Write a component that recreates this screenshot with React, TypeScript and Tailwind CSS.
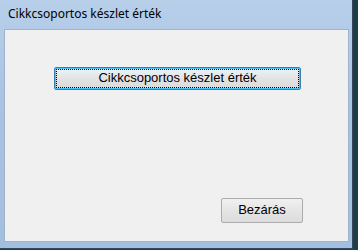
export default function App() {
  return (
    <div className="flex h-[250px] w-[358px] items-start overflow-hidden bg-[#1d3f44]">
      <div className="flex h-[249px] w-[353px] flex-col border-b border-r border-[#34475e] bg-[linear-gradient(180deg,#b7cfe9_0%,#a9c3e2_40%,#a3bfdf_100%)]">
        <div className="flex h-[29px] shrink-0 items-center pb-[2px] pl-[8px] font-['Noto_Sans',sans-serif] text-[12px] text-black">
          Cikkcsoportos készlet érték
        </div>
        <div className="ml-[4px] flex h-[213px] w-[345px] flex-col border border-[#9fb4cc] bg-[#f0f0f0] font-['Liberation_Sans',Arial,sans-serif] text-[13px] text-black">
          <div className="flex pl-[49px] pt-[37px]">
            <button className="flex h-[23px] w-[247px] items-center justify-center rounded-[2px] border border-[#3c7fb1] bg-[linear-gradient(180deg,#ecf4fb_0%,#e3e3e3_50%,#dadada_100%)] p-[1px] shadow-[inset_0_0_0_1px_#48c5f8]">
              <span className="flex h-full w-full items-center justify-center border border-dotted border-black pb-[1px]">
                Cikkcsoportos készlet érték
              </span>
            </button>
          </div>
          <div className="mt-auto flex justify-end pb-[18px] pr-[45px]">
            <button className="flex h-[25px] w-[82px] items-center justify-center rounded-[2px] border border-[#acacac] bg-[linear-gradient(180deg,#f0f0f0_0%,#e5e5e5_50%,#dcdcdc_100%)] pb-[1px]">
              Bezárás
            </button>
          </div>
        </div>
      </div>
    </div>
  );
}
